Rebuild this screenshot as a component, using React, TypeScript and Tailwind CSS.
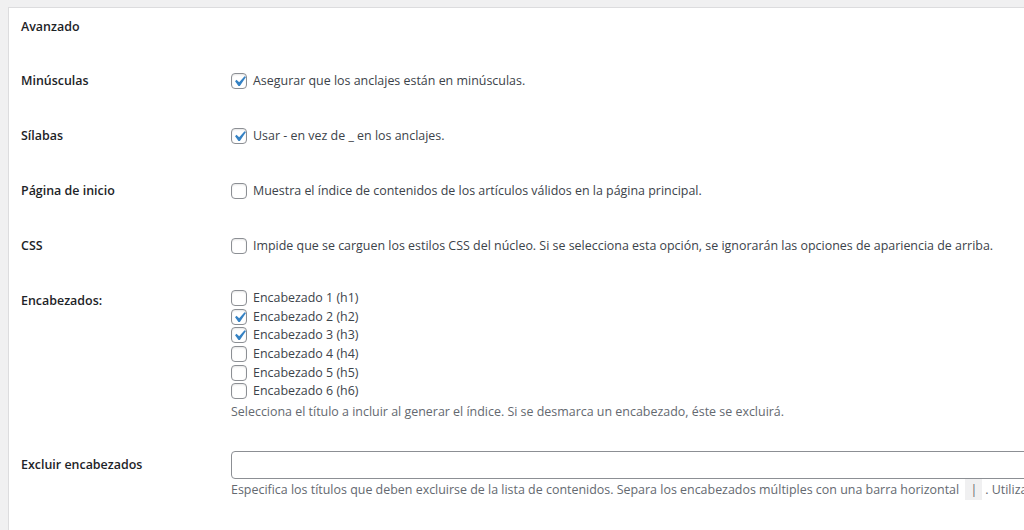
import React from "react";

const font = { fontFamily: '"Open Sans", "Noto Sans", sans-serif' };

function Box({ checked }: { checked?: boolean }) {
  return (
    <span className="relative inline-flex h-[16px] w-[16px] shrink-0 items-center justify-center rounded-[4px] border border-[#8c8f94] bg-white shadow-[inset_0_1px_2px_rgba(0,0,0,0.1)]">
      {checked && (
        <svg viewBox="0 0 20 20" className="absolute left-[-3px] top-[-3px] h-[21px] w-[21px]">
          <path d="M14.83 4.89l1.34.94-5.81 8.38H9.02L5.78 9.67l1.34-1.25 2.57 2.4z" fill="#3582c4" />
        </svg>
      )}
    </span>
  );
}

function Check({ checked, text }: { checked?: boolean; text: string }) {
  return (
    <div className="flex items-center gap-[6px] whitespace-nowrap text-[12.45px] leading-[18px] text-[#3c434a]">
      <Box checked={checked} />
      <span>{text}</span>
    </div>
  );
}

function Row({ label, children }: { label: string; children: React.ReactNode }) {
  return (
    <div className="flex h-[55px] items-center">
      <div className="w-[210px] shrink-0 text-[12.45px] font-semibold leading-[18px] text-[#1d2327]">{label}</div>
      <div>{children}</div>
    </div>
  );
}

export default function App() {
  const heads = [
    { n: 1, c: false },
    { n: 2, c: true },
    { n: 3, c: true },
    { n: 4, c: false },
    { n: 5, c: false },
    { n: 6, c: false },
  ];
  return (
    <div className="h-[530px] w-[1024px] overflow-hidden bg-[#f0f0f1] pl-[8px] pt-[7px]" style={font}>
      <div className="h-[600px] w-[1100px] border border-[#dcdcde] bg-white pl-[12px]">
        <div className="h-[45px] pt-[10px] text-[12.45px] font-semibold leading-[18px] text-[#1d2327]">Avanzado</div>
        <Row label="Minúsculas">
          <Check checked text="Asegurar que los anclajes están en minúsculas." />
        </Row>
        <Row label="Sílabas">
          <Check checked text="Usar - en vez de _ en los anclajes." />
        </Row>
        <Row label="Página de inicio">
          <Check text="Muestra el índice de contenidos de los artículos válidos en la página principal." />
        </Row>
        <Row label="CSS">
          <Check text="Impide que se carguen los estilos CSS del núcleo. Si se selecciona esta opción, se ignorarán las opciones de apariencia de arriba." />
        </Row>
        <div className="flex h-[163px]">
          <div className="w-[210px] shrink-0 pt-[19px] text-[12.45px] font-semibold leading-[18px] text-[#1d2327]">Encabezados:</div>
          <div className="pt-[16px]">
            {heads.map((h) => (
              <div key={h.n} className="flex h-[18.6px] items-center">
                <Check checked={h.c} text={`Encabezado ${h.n} (h${h.n})`} />
              </div>
            ))}
            <div className="mt-[2px] whitespace-nowrap text-[12.45px] leading-[18px] text-[#646970]">
              Selecciona el título a incluir al generar el índice. Si se desmarca un encabezado, éste se excluirá.
            </div>
          </div>
        </div>
        <div className="flex">
          <div className="w-[210px] shrink-0 pt-[20px] text-[12.45px] font-semibold leading-[18px] text-[#1d2327]">Excluir encabezados</div>
          <div className="pt-[15px]">
            <div className="h-[28px] w-[900px] rounded-[4px] border border-[#8c8f94] bg-white" />
            <div className="mt-[2px] whitespace-nowrap text-[12.45px] leading-[18px] text-[#646970]">
              Especifica los títulos que deben excluirse de la lista de contenidos. Separa los encabezados múltiples con una barra horizontal{" "}
              <code className="mx-[3px] bg-[#f0f0f1] px-[5px] py-[2px] text-[12.45px]" style={font}>|</code>. Utiliza un asterisco{" "}
              <code className="bg-[#f0f0f1] px-[5px] py-[2px] text-[12.45px]" style={font}>*</code> como comodín.
            </div>
          </div>
        </div>
      </div>
    </div>
  );
}
